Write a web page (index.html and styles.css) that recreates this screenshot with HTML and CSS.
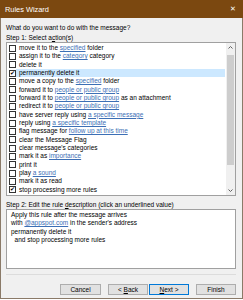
FILE: index.html
```html
<!DOCTYPE html>
<html lang="en">
<head>
    <meta charset="UTF-8">
    <title>Rules Wizard</title>
    <link rel="stylesheet" href="styles.css">
</head>
<body>
    <div class="window">
        <div class="titlebar">
            <span>Rules Wizard</span>
            <span class="close">&#x2715;</span>
        </div>
        <div class="content">
            <div class="prompt">What do you want to do with the message?</div>
            <div class="step">Step 1: Select a<u>c</u>tion(s)</div>
            <div class="listbox">
                <div class="rows">
                    <div class="row"><span class="cb"></span><span class="label">move it to the <a>specified</a> folder</span></div>
                    <div class="row"><span class="cb"></span><span class="label">assign it to the <a>category</a> category</span></div>
                    <div class="row"><span class="cb"></span><span class="label">delete it</span></div>
                    <div class="row selected"><span class="cb">&#x2714;</span><span class="label">permanently delete it</span></div>
                    <div class="row"><span class="cb"></span><span class="label">move a copy to the <a>specified</a> folder</span></div>
                    <div class="row"><span class="cb"></span><span class="label">forward it to <a>people or public group</a></span></div>
                    <div class="row"><span class="cb"></span><span class="label">forward it to <a>people or public group</a> as an attachment</span></div>
                    <div class="row"><span class="cb"></span><span class="label">redirect it to <a>people or public group</a></span></div>
                    <div class="row"><span class="cb"></span><span class="label">have server reply using <a>a specific message</a></span></div>
                    <div class="row"><span class="cb"></span><span class="label">reply using <a>a specific template</a></span></div>
                    <div class="row"><span class="cb"></span><span class="label">flag message for <a>follow up at this time</a></span></div>
                    <div class="row"><span class="cb"></span><span class="label">clear the Message Flag</span></div>
                    <div class="row"><span class="cb"></span><span class="label">clear message's categories</span></div>
                    <div class="row"><span class="cb"></span><span class="label">mark it as <a>importance</a></span></div>
                    <div class="row"><span class="cb"></span><span class="label">print it</span></div>
                    <div class="row"><span class="cb"></span><span class="label">play <a>a sound</a></span></div>
                    <div class="row"><span class="cb"></span><span class="label">mark it as read</span></div>
                    <div class="row"><span class="cb">&#x2714;</span><span class="label">stop processing more rules</span></div>
                </div>
                <div class="scrollbar">
                    <svg class="arrow" width="9" height="9" viewBox="0 0 9 9"><path d="M2.5 5.5 L4.5 3.5 L6.5 5.5" fill="none" stroke="#606060" stroke-width="1"/></svg>
                    <div class="track"><div class="thumb"></div></div>
                    <svg class="arrow" width="9" height="9" viewBox="0 0 9 9"><path d="M2.5 3.5 L4.5 5.5 L6.5 3.5" fill="none" stroke="#606060" stroke-width="1"/></svg>
                </div>
            </div>
            <div class="step step2">Step 2: Edit the rule <u>d</u>escription (click an underlined value)</div>
            <div class="desc">
                <div>Apply this rule after the message arrives</div>
                <div>with <a>@appspot.com</a> in the sender's address</div>
                <div>permanently delete it</div>
                <div>&nbsp; and stop processing more rules</div>
            </div>
        </div>
        <div class="separator"></div>
        <div class="buttons">
            <button class="btn cancel">Cancel</button>
            <button class="btn back">&lt; <u>B</u>ack</button>
            <button class="btn next"><u>N</u>ext &gt;</button>
            <button class="btn">Finish</button>
        </div>
    </div>
</body>
</html>
```

FILE: styles.css
```css
body {
    margin: 0;
    width: 243px;
    height: 300px;
    background: #ffffff;
    font-family: "Liberation Sans", Arial, sans-serif;
    font-size: 6.5px;
    color: #000;
    overflow: hidden;
}

.window {
    width: 243px;
    height: 299px;
    background: #f0f0f0;
    border: 1px solid #8a7a68;
    border-top: none;
    box-sizing: border-box;
    display: flex;
    flex-direction: column;
}

/* 标题栏 */
.titlebar {
    height: 18px;
    margin: 0 -1px;
    background: #7b4810;
    color: #fff;
    display: flex;
    align-items: center;
    justify-content: space-between;
    padding: 0 7px 0 5px;
    font-size: 7.4px;
}

.close {
    font-size: 7px;
}

.content {
    padding: 4px 6px 0 5px;
    display: flex;
    flex-direction: column;
}

.prompt {
    line-height: 9px;
    margin-top: 1px;
}

.step {
    line-height: 9px;
    margin-top: 1px;
}

.listbox {
    height: 152px;
    background: #fff;
    border: 1px solid #a0a0a0;
    display: flex;
}

.rows {
    flex: 1;
    padding-top: 1px;
    min-width: 0;
}

.row {
    height: 8.33px;
    display: flex;
    align-items: center;
    white-space: nowrap;
    padding-left: 2px;
}

.cb {
    width: 5px;
    height: 5px;
    border: 1px solid #333;
    background: #fff;
    flex-shrink: 0;
    font-size: 6px;
    line-height: 5px;
    text-align: center;
}

.label {
    flex: 1;
    padding-left: 3px;
    line-height: 8px;
    height: 8px;
}

/* 选中行的高亮 */
.selected .label {
    background: #cce8ff;
    margin-right: 1px;
}

a {
    color: #3c6fb5;
    text-decoration: underline;
}

.scrollbar {
    width: 9px;
    background: #f0f0f0;
    display: flex;
    flex-direction: column;
}

.arrow {
    display: block;
}

.track {
    flex: 1;
    padding: 3px 1px 0;
}

.thumb {
    height: 110px;
    background: #cdcdcd;
}

.step2 {
    margin-top: 4px;
}

.desc {
    height: 56px;
    background: #fff;
    border: 1px solid #a0a0a0;
    padding: 1px 4px;
    line-height: 8.33px;
}

.separator {
    margin: 5px 6px 0 5px;
    border-top: 1px solid #dcdcdc;
}

.buttons {
    display: flex;
    justify-content: flex-end;
    padding: 9px 6px 0 0;
}

.btn {
    width: 40px;
    height: 11px;
    padding: 0;
    font-family: inherit;
    font-size: 6.5px;
    background: #e1e1e1;
    border: 1px solid #adadad;
    color: #000;
}

.cancel {
    width: 41px;
    margin-right: 7px;
}

.back {
    margin-right: 1px;
}

.next {
    border-color: #0078d7;
    margin-right: 7px;
}
```
